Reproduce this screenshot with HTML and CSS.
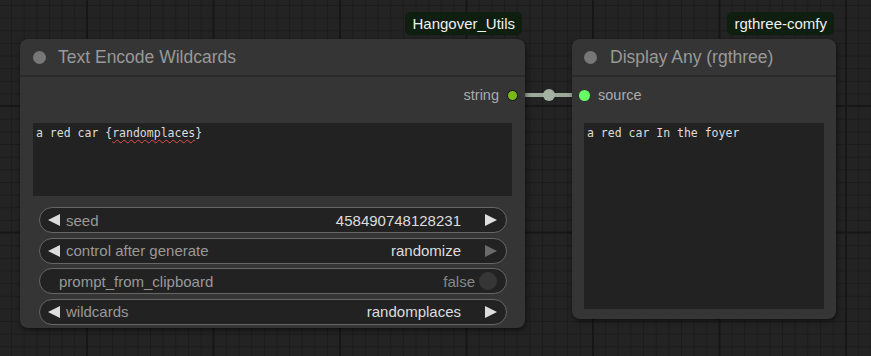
FILE: index.html
```html
<!DOCTYPE html>
<html lang="en">
<head>
  <meta charset="UTF-8">
  <meta name="viewport" content="width=device-width, initial-scale=1.0">
  <title>Wildcards</title>
  <link rel="stylesheet" href="styles.css">
</head>
<body>

  <div class="canvas">
    <!-- link between the two nodes, drawn under them -->
    <div class="link"><span class="link-dot"></span></div>

    <div class="node node-wildcards">
      <div class="badge">Hangover_Utils</div>
      <div class="node-title"><span class="title-dot"></span>Text Encode Wildcards</div>
      <div class="node-body">
        <div class="slot slot-out">string <span class="slot-dot dot-out"></span></div>
        <div class="textbox textbox-short">a red car {<span class="misspelled">randomplaces</span>}</div>

        <div class="widgets">
          <div class="widget">
            <span class="arrow arrow-left"></span>
            <span class="w-label">seed</span>
            <span class="w-value">458490748128231</span>
            <span class="arrow arrow-right"></span>
          </div>
          <div class="widget">
            <span class="arrow arrow-left"></span>
            <span class="w-label">control after generate</span>
            <span class="w-value">randomize</span>
            <span class="arrow arrow-right disabled"></span>
          </div>
          <div class="widget widget-toggle">
            <span class="w-label">prompt_from_clipboard</span>
            <span class="w-value muted">false</span>
            <span class="toggle"></span>
          </div>
          <div class="widget">
            <span class="arrow arrow-left"></span>
            <span class="w-label">wildcards</span>
            <span class="w-value">randomplaces</span>
            <span class="arrow arrow-right"></span>
          </div>
        </div>
      </div>
    </div>

    <div class="node node-display">
      <div class="badge">rgthree-comfy</div>
      <div class="node-title"><span class="title-dot"></span>Display Any (rgthree)</div>
      <div class="node-body">
        <div class="slot slot-in"><span class="slot-dot dot-in"></span> source</div>
        <div class="textbox textbox-tall">a red car In the foyer</div>
      </div>
    </div>
  </div>

</body>
</html>
```

FILE: styles.css
```css
/* Reset */
* {
  margin: 0;
  padding: 0;
  box-sizing: border-box;
}

/* Canvas with the grid */
body {
  width: 871px;
  height: 356px;
  overflow: hidden;
  font-family: 'Liberation Sans', Arial, sans-serif;
  background-color: #232323;
  background-image:
    linear-gradient(90deg, #171717 2px, transparent 2px),
    linear-gradient(#171717 2px, transparent 2px),
    linear-gradient(90deg, #1c1c1c 1px, transparent 1px),
    linear-gradient(#1c1c1c 1px, transparent 1px);
  background-size: 126.5px 126.5px, 126.5px 126.5px, 12.65px 12.65px, 12.65px 12.65px;
  background-position: 86px 105px, 86px 105px, 11px 5px, 11px 5px;
}

.canvas {
  position: relative;
  width: 871px;
  height: 356px;
}

/* Link */
.link {
  position: absolute;
  left: 520px;
  top: 93px;
  width: 56px;
  height: 4px;
  background: #9aa99a;
}

.link-dot {
  position: absolute;
  left: 23px;
  top: -4px;
  width: 12px;
  height: 12px;
  border-radius: 50%;
  background: #a3b2a3;
}

/* Nodes */
.node {
  position: absolute;
  background: #353535;
  border-radius: 8px;
  box-shadow: 1px 2px 5px rgba(0, 0, 0, 0.55);
}

.node-wildcards {
  left: 20px;
  top: 39px;
  width: 505px;
  height: 289px;
}

.node-display {
  left: 572px;
  top: 39px;
  width: 264px;
  height: 280px;
}

/* Badge above the node */
.badge {
  position: absolute;
  top: -27px;
  right: 3px;
  height: 23px;
  line-height: 23px;
  padding: 0 7px;
  border-radius: 5px;
  background: #0f1f0f;
  color: #f0f0f0;
  font-size: 15px;
}

.node-display .badge {
  right: 2px;
}

/* Title */
.node-title {
  display: flex;
  align-items: center;
  height: 38px;
  padding: 1px 0 0 13px;
  border-bottom: 2px solid #2a2a2a;
  color: #999;
  font-size: 17.5px;
}

.title-dot {
  width: 13px;
  height: 13px;
  border-radius: 50%;
  background: #777;
  margin-right: 12px;
}

.node-display .node-title {
  padding-left: 12px;
}

.node-display .title-dot {
  margin-right: 13px;
}

/* Body */
.node-body {
  padding: 0 13px;
  display: flex;
  flex-direction: column;
}

.node-display .node-body {
  padding: 0 12px;
}

/* Slots */
.slot {
  display: flex;
  align-items: center;
  height: 24px;
  margin-top: 6px;
  color: #aaa;
  font-size: 14.5px;
}

.slot-out {
  justify-content: flex-end;
  margin-right: -6px;
}

.slot-in {
  margin-left: -5px;
}

.slot-dot {
  width: 11px;
  height: 11px;
  border-radius: 50%;
}

.dot-out {
  background: #7ab91b;
  border: 1px solid #111;
  margin-left: 8px;
}

.dot-in {
  background: #66ff66;
  margin-right: 8px;
}

/* Text boxes */
.textbox {
  background: #222;
  color: #dcdcdc;
  font-family: 'DejaVu Sans Mono', 'Liberation Mono', monospace;
  font-size: 11.5px;
  line-height: 15px;
  padding: 3px 3px;
  margin-top: 16px;
  white-space: pre;
}

.textbox-short {
  height: 73px;
}

.textbox-tall {
  height: 186px;
}

.misspelled {
  text-decoration: underline wavy #e05050;
  text-decoration-thickness: 1px;
  text-underline-offset: 2px;
}

/* Widgets */
.widgets {
  display: flex;
  flex-direction: column;
  gap: 4.5px;
  margin: 11px 5px 0 6px;
}

.widget {
  display: flex;
  align-items: center;
  height: 26px;
  padding: 0 9px 0 8px;
  background: #222;
  border: 1px solid #666;
  border-radius: 13px;
  font-size: 15px;
}

.w-label {
  color: #999;
  margin-left: 6px;
}

.w-value {
  margin-left: auto;
  color: #ddd;
}

.w-value.muted {
  color: #888;
}

.arrow {
  width: 0;
  height: 0;
  border-top: 6px solid transparent;
  border-bottom: 6px solid transparent;
}

.arrow-left {
  border-right: 12px solid #ddd;
}

.arrow-right {
  border-left: 12px solid #ddd;
  margin-left: 24px;
}

.arrow-right.disabled {
  border-left-color: #6a6a6a;
}

.widget-toggle {
  padding-left: 13px;
}

.toggle {
  width: 18px;
  height: 18px;
  border-radius: 50%;
  background: #363636;
  margin-left: 4px;
}
```
